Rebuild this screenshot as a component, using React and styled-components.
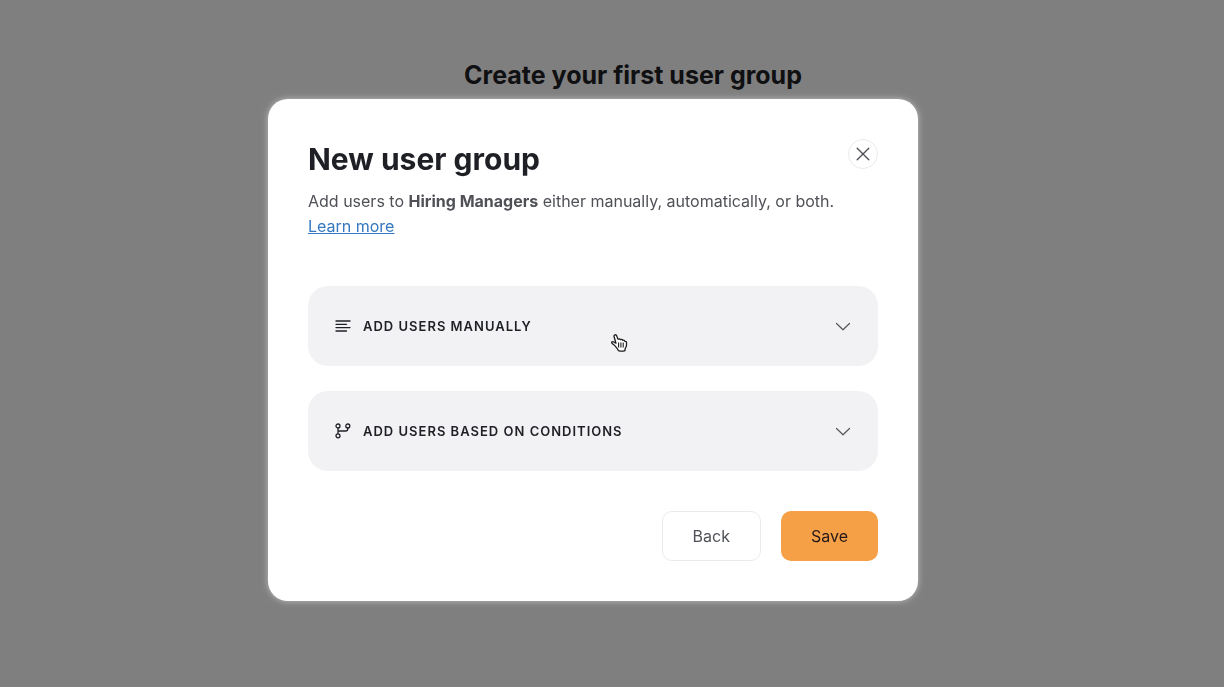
import React from 'react'
import styled, { createGlobalStyle } from 'styled-components'

const GlobalStyle = createGlobalStyle`
  * {
    box-sizing: border-box;
  }
  body {
    margin: 0;
    background-color: #fff;
    color: #1f2025;
    font-family: Inter, "Liberation Sans", sans-serif;
    -webkit-font-smoothing: antialiased;
  }
  button {
    font-family: inherit;
    cursor: pointer;
  }
`

const Page = styled.main`
  min-height: 100vh;
  padding: 59px 0 0 42px;
`

const PageTitle = styled.h1`
  margin: 0;
  font-size: 25px;
  line-height: 32px;
  font-weight: 700;
  text-align: center;
`

const Overlay = styled.div`
  position: fixed;
  inset: 0;
  display: flex;
  justify-content: center;
  align-items: flex-start;
  padding: 99px 38px 40px 0;
  background-color: rgba(0, 0, 0, 0.5);
  overflow: auto;
`

const Modal = styled.section`
  width: 100%;
  max-width: 650px;
  padding: 40px;
  border-radius: 20px;
  background-color: #fff;
  box-shadow: 0 0 6px rgba(255, 255, 255, 0.5);
`

const Header = styled.header`
  display: flex;
  justify-content: space-between;
  align-items: flex-start;
`

const Title = styled.h2`
  margin: 0 0 10px;
  font-size: 30px;
  line-height: 40px;
  font-weight: 700;
`

const Description = styled.p`
  margin: 0 0 47px;
  color: #4f5157;
  font-size: 16px;
  line-height: 25px;
`

const Link = styled.a`
  color: #3478c0;
  text-decoration: underline;
`

const CloseButton = styled.button`
  display: flex;
  justify-content: center;
  align-items: center;
  width: 30px;
  height: 30px;
  padding: 0;
  border: 1px solid #ebebed;
  border-radius: 50%;
  background-color: #fff;
  color: #4a4b50;
`

const Options = styled.div`
  display: flex;
  flex-direction: column;
  gap: 25px;
`

const Option = styled.button`
  position: relative;
  display: flex;
  align-items: center;
  gap: 12px;
  width: 100%;
  height: 80px;
  padding: 0 27px;
  border: none;
  border-radius: 20px;
  background-color: #f2f2f4;
  color: #1f2025;
`

const OptionLabel = styled.span`
  flex: 1;
  font-size: 13px;
  line-height: 20px;
  font-weight: 600;
  letter-spacing: 1px;
  text-align: left;
  text-transform: uppercase;
`

const Pointer = styled.svg`
  position: absolute;
  top: 48px;
  left: 303px;
`

const Footer = styled.footer`
  display: flex;
  justify-content: flex-end;
  gap: 20px;
  margin-top: 40px;
`

const Button = styled.button`
  height: 50px;
  padding: 0 30px;
  border: ${(props) => (props.$primary ? 'none' : '1px solid #ebebed')};
  border-radius: 10px;
  background-color: ${(props) => (props.$primary ? '#f5a047' : '#fff')};
  color: ${(props) => (props.$primary ? '#24181a' : '#4f5157')};
  font-size: 16px;
  line-height: 24px;
`

const CloseIcon = () => (
  <svg width="14" height="14" viewBox="0 0 14 14" fill="none" stroke="currentColor" strokeWidth="1.3" strokeLinecap="round" aria-hidden="true">
    <path d="M1.200 1.200l11.600 11.600M12.800 1.200L1.200 12.800" />
  </svg>
)

const LinesIcon = () => (
  <svg width="16" height="16" viewBox="0 0 16 16" fill="none" stroke="currentColor" strokeWidth="1.3" strokeLinecap="round" aria-hidden="true">
    <path d="M1 3h14M1 6.300h10.500M1 9.600h14M1 13h10.500" />
  </svg>
)

const BranchIcon = () => (
  <svg width="16" height="16" viewBox="0 0 16 16" fill="none" stroke="currentColor" strokeWidth="1.3" strokeLinecap="round" aria-hidden="true">
    <circle cx="3" cy="3" r="2" />
    <circle cx="12.800" cy="3" r="2" />
    <circle cx="3" cy="12.800" r="2" />
    <path d="M3 5v5.800M12.800 5v.8Q12.800 8 10.600 8H3" />
  </svg>
)

const ChevronIcon = () => (
  <svg width="16" height="16" viewBox="0 0 16 16" fill="none" stroke="#55565b" strokeWidth="1.2" strokeLinecap="round" strokeLinejoin="round" aria-hidden="true">
    <path d="M1.500 5.500L8 11.800l6.500-6.300" />
  </svg>
)

const HandPointer = () => (
  <Pointer width="17" height="18" viewBox="0 0 17 18" aria-hidden="true">
    <path
      d="M5.100 9.800L3.300 3.500C2.800 2 3 1 4 .8c1-.2 1.600.5 2 1.700l1 2.700c.9-.5 1.900-.3 2.400.4.900-.4 1.900-.1 2.300.7.900-.2 1.900.1 2.200 1 .9-.1 1.600.4 1.600 1.500v2.400c0 1.500-.9 2.400-1.500 3.800v1.600c-1.400.5-5 .5-6.600 0-.5-1.800-2-3-3-4.300C3.400 11 2.300 10.600 1.400 9.800.5 9 .5 8.200 1.100 7.800c.9-.5 1.900.1 2.900 1.200"
      fill="#fff"
      stroke="#1c1c1c"
      strokeWidth="1.3"
      strokeLinejoin="round"
    />
    <path d="M7.600 8.500v5M9.900 8.500v5M12.200 8.500v5" stroke="#1c1c1c" strokeWidth="1.1" />
  </Pointer>
)

const App = () => {
  return (
    <>
      <GlobalStyle />

      <Page>
        <PageTitle>Create your first user group</PageTitle>
      </Page>

      <Overlay>
        <Modal role="dialog" aria-modal="true" aria-labelledby="modal-title">

          <Header>
            <Title id="modal-title">New user group</Title>
            <CloseButton type="button" aria-label="Close">
              <CloseIcon />
            </CloseButton>
          </Header>

          <Description>
            Add users to <strong>Hiring Managers</strong> either manually, automatically, or both.{' '}
            <Link href="#learn-more">Learn more</Link>
          </Description>

          <Options>
            <Option type="button" aria-expanded="false">
              <LinesIcon />
              <OptionLabel>Add users manually</OptionLabel>
              <ChevronIcon />
              <HandPointer />
            </Option>
            <Option type="button" aria-expanded="false">
              <BranchIcon />
              <OptionLabel>Add users based on conditions</OptionLabel>
              <ChevronIcon />
            </Option>
          </Options>

          <Footer>
            <Button type="button">Back</Button>
            <Button type="button" $primary>Save</Button>
          </Footer>

        </Modal>
      </Overlay>
    </>
  )
}

export default App
